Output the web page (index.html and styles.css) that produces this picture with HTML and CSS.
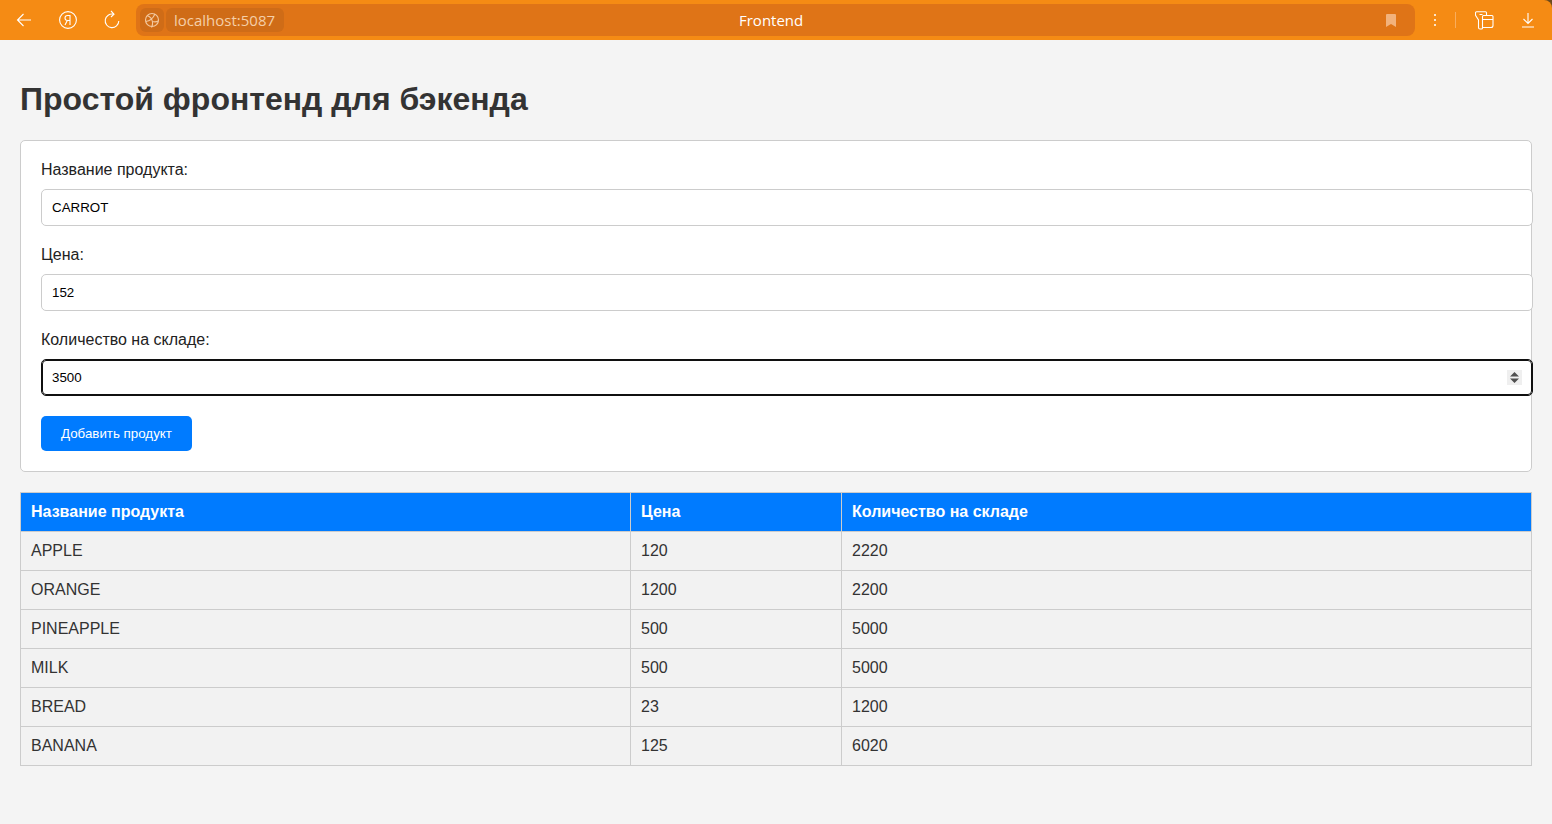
FILE: index.html
```html
<!DOCTYPE html>
<html lang="ru">
<head>
  <meta charset="UTF-8" />
  <title>Frontend</title>
  <link rel="stylesheet" href="styles.css">
</head>
<body>

  <!-- BROWSER BAR -->
  <div class="browser-frame">
    <div class="browser-bar">
      <svg class="tool-icon icon-back" viewBox="0 0 16 14" width="16" height="14"><path d="M15 7H1.500M7.500 1 1.500 7l6 6" /></svg>
      <svg class="tool-icon icon-ya" viewBox="0 0 20 20" width="20" height="20"><circle cx="10" cy="10" r="8.400" /><path d="M12 15V5.500H9.600C8 5.500 7 6.500 7 8s1 2.500 2.600 2.500H12M9.300 10.500 7 15" /></svg>
      <svg class="tool-icon icon-reload" viewBox="0 0 18 20" width="18" height="20"><path d="M10.500 4.200A6.800 6.800 0 1 0 15.800 11M8 1l3 3.200L8 7" /></svg>
      <div class="url-bar">
        <span class="site-chip">
          <svg class="tool-icon icon-globe" viewBox="0 0 16 16" width="16" height="16"><circle cx="8" cy="8" r="6.500" /><path d="M3 3.500c3 1 5 3.500 5.500 6.500s-.5 4.500-1 5.500M1.800 9.500C5 9 9 6.500 11 2M8.500 9.500c2 .5 4 .5 5.800-.5" /></svg>
        </span>
        <span class="host-chip">localhost:5087</span>
        <span class="page-title">Frontend</span>
        <svg class="bookmark" viewBox="0 0 10 13" width="10" height="13"><path d="M0 1a1 1 0 0 1 1-1h8a1 1 0 0 1 1 1v12L5 10l-5 3z" /></svg>
      </div>
      <div class="menu-dots"><i></i><i></i><i></i></div>
      <div class="bar-sep"></div>
      <svg class="tool-icon icon-tabs" viewBox="0 0 19 19" width="19" height="19"><path d="M1.500 .8h9a1 1 0 0 1 1 1v2.700M1.500 .8a1 1 0 0 0-1 1v2.500L3.500 9v7.500a1.500 1.500 0 0 0 1.500 1.500h1.500a1 1 0 0 0 1-1v-1.500M4.500 3.500h3M7.500 5.500a1 1 0 0 1 1-1h8.500a1 1 0 0 1 1 1v9a2 2 0 0 1-2 2H7.500zM7.500 8.500H18" /></svg>
      <svg class="tool-icon icon-download" viewBox="0 0 14 16" width="14" height="16"><path d="M7 1v10M2.500 7 7 11.500 11.500 7M1 15h12" /></svg>
    </div>
  </div>

  <div class="page">
    <h1>Простой фронтенд для бэкенда</h1>

    <!-- PRODUCT FORM -->
    <form class="product-form">
      <div class="field">
        <label for="name">Название продукта:</label>
        <input id="name" type="text" value="CARROT">
      </div>
      <div class="field">
        <label for="price">Цена:</label>
        <input id="price" type="text" value="152">
      </div>
      <div class="field">
        <label for="stock">Количество на складе:</label>
        <div class="input-focused">
          <input id="stock" type="text" value="3500">
          <span class="spinner"><svg viewBox="0 0 9 11" width="9" height="11"><path d="M4.500 0 9 4.500H0zM0 6.500h9L4.500 11z" /></svg></span>
        </div>
      </div>
      <button type="button">Добавить продукт</button>
    </form>

    <!-- PRODUCT TABLE -->
    <table>
      <colgroup>
        <col class="col-name">
        <col class="col-price">
        <col>
      </colgroup>
      <thead>
        <tr><th>Название продукта</th><th>Цена</th><th>Количество на складе</th></tr>
      </thead>
      <tbody>
        <tr><td>APPLE</td><td>120</td><td>2220</td></tr>
        <tr><td>ORANGE</td><td>1200</td><td>2200</td></tr>
        <tr><td>PINEAPPLE</td><td>500</td><td>5000</td></tr>
        <tr><td>MILK</td><td>500</td><td>5000</td></tr>
        <tr><td>BREAD</td><td>23</td><td>1200</td></tr>
        <tr><td>BANANA</td><td>125</td><td>6020</td></tr>
      </tbody>
    </table>
  </div>

</body>
</html>
```

FILE: styles.css
```css
body {
  margin: 0;
  font-family: "Liberation Sans", Arial, sans-serif;
  background: #f4f4f4;
  color: #333;
  overflow: hidden;
}

/* browser bar */
.browser-frame {
  background: #6b4a1f;
}

.browser-bar {
  display: flex;
  align-items: center;
  height: 40px;
  padding-left: 16px;
  box-sizing: border-box;
  background: #f58b14;
  border-top-right-radius: 8px;
}

.tool-icon {
  flex: none;
  fill: none;
  stroke: #fff;
  stroke-width: 1.100;
}

.icon-back { margin-right: 26px; }
.icon-ya { margin-right: 25px; }
.icon-reload { margin-right: 15px; }

.url-bar {
  display: flex;
  align-items: center;
  gap: 2px;
  position: relative;
  width: 1279px;
  height: 32px;
  padding: 0 4px;
  box-sizing: border-box;
  border-radius: 8px;
  background: #df7417;
}

.site-chip, .host-chip {
  display: flex;
  align-items: center;
  height: 24px;
  border-radius: 6px;
  background: #cf6c17;
}

.site-chip {
  justify-content: center;
  width: 24px;
}

.icon-globe {
  stroke: #f3c9a0;
}

.host-chip {
  padding: 0 9px 0 8px;
  font-family: "Open Sans", sans-serif;
  font-size: 15px;
  color: #f5cfa8;
}

.page-title {
  position: absolute;
  left: 603px;
  font-family: "Open Sans", sans-serif;
  font-size: 15px;
  color: #fff;
}

.bookmark {
  position: absolute;
  right: 19px;
  fill: #f2b27c;
}

.menu-dots {
  display: flex;
  flex-direction: column;
  gap: 3px;
  margin-left: 19px;
}

.menu-dots i {
  width: 2px;
  height: 2px;
  background: #fbe3c6;
}

.bar-sep {
  width: 1px;
  height: 16px;
  margin: 0 19px 0 19px;
  background: #f9ad5c;
}

.icon-tabs { margin-right: 27px; }

/* page */
.page {
  padding: 0 20px;
}

h1 {
  margin: 41px 0 22px;
  font-size: 32px;
  line-height: 37px;
}

.product-form {
  padding: 20px;
  margin-bottom: 20px;
  background: #fff;
  border: 1px solid #ccc;
  border-radius: 5px;
}

.field {
  margin-bottom: 20px;
}

label {
  display: block;
  margin-bottom: 10px;
  font-size: 16px;
  line-height: 18px;
  color: #222;
}

/* no border-box here: the fields stick out past the card padding */
input {
  display: block;
  width: 100%;
  height: 15px;
  padding: 10px;
  font-family: "Liberation Sans", Arial, sans-serif;
  font-size: 13.333px;
  color: #000;
  background: #fff;
  border: 1px solid #ccc;
  border-radius: 5px;
}

.input-focused {
  position: relative;
}

.input-focused input {
  border-color: #101010;
  outline: 1px solid #101010;
  outline-offset: -2px;
}

.spinner {
  position: absolute;
  top: 11px;
  right: -11px;
  display: flex;
  align-items: center;
  justify-content: center;
  width: 15px;
  height: 15px;
  background: #efefef;
}

.spinner svg {
  fill: #505050;
}

button {
  display: block;
  height: 35px;
  padding: 0 20px;
  font-family: "Liberation Sans", Arial, sans-serif;
  font-size: 13.333px;
  color: #fff;
  background: #007bff;
  border: none;
  border-radius: 5px;
}

/* table */
table {
  width: 100%;
  border-collapse: collapse;
  table-layout: fixed;
}

.col-name { width: 610px; }
.col-price { width: 211px; }

th, td {
  padding: 10px;
  font-size: 16px;
  line-height: 18px;
  text-align: left;
  border: 1px solid #ccc;
}

th {
  color: #fff;
  background: #007bff;
}

td {
  background: #f2f2f2;
}
```
